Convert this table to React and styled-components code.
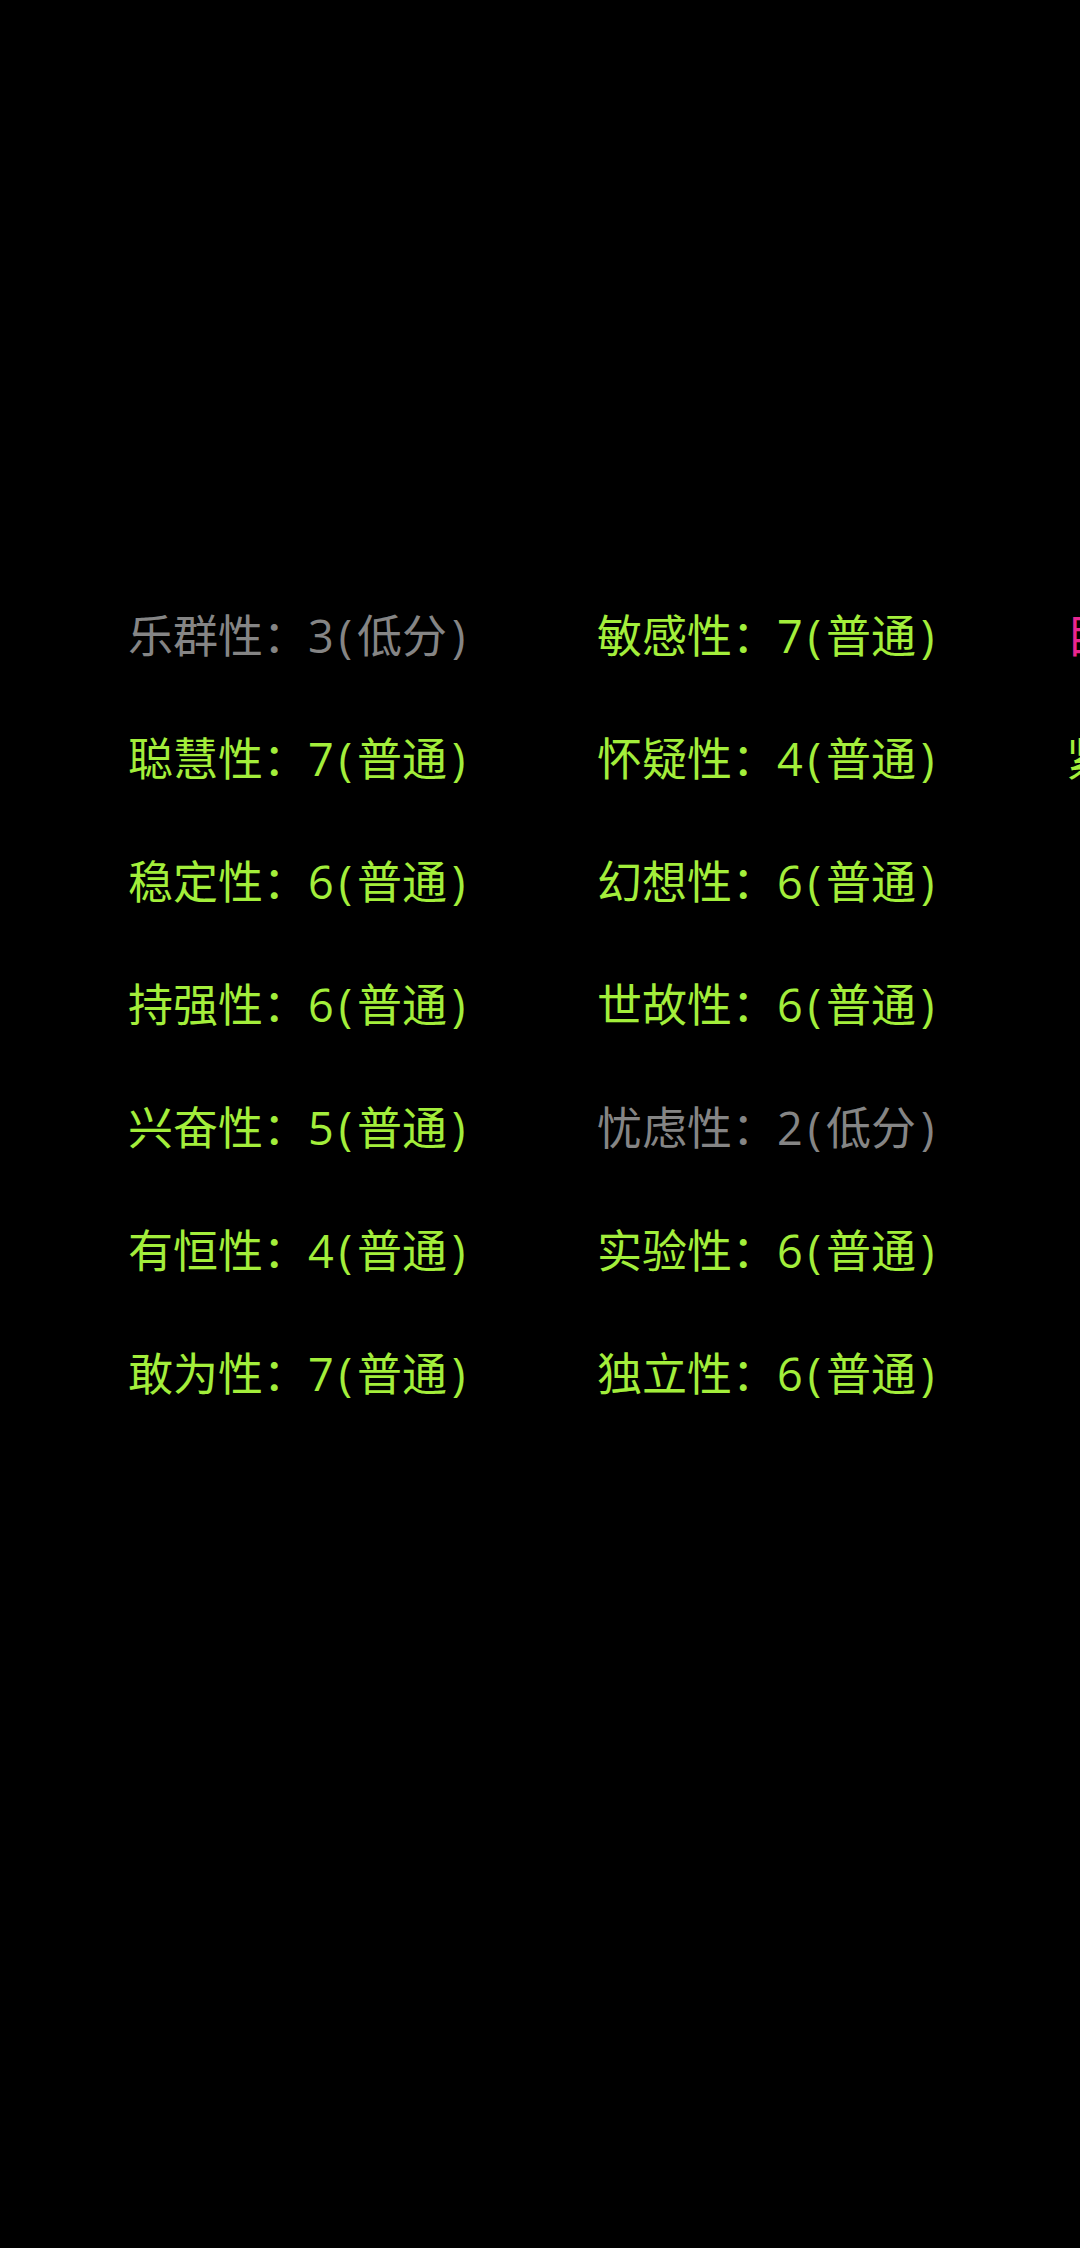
import React from "react";
import styled, { createGlobalStyle } from "styled-components";

const Global = createGlobalStyle`
  html, body {
    margin: 0;
    padding: 0;
    background: #000;
    overflow: hidden;
  }
  body {
    width: 1080px;
    height: 2248px;
    font-family: "Open Sans", "Noto Sans CJK SC", sans-serif;
  }
`;

const Screen = styled.div`
  width: 1080px;
  height: 2248px;
  background: #000;
  overflow: hidden;
  box-sizing: border-box;
  padding: 574px 0 0 128px;
`;

const Table = styled.div`
  display: grid;
  grid-template-columns: repeat(3, 469px);
  grid-auto-rows: 123px;
  width: 1407px;
`;

const COLORS = {
  normal: "#a3ee3b",
  low: "#858585",
  pink: "#e9268f",
};

const Cell = styled.div`
  font-family: "Open Sans", "Noto Sans CJK SC", sans-serif;
  font-size: 45px;
  line-height: 123px;
  white-space: nowrap;
  color: ${(p) => COLORS[p.$tone] || COLORS.normal};
`;

const Paren = styled.span`
  display: inline-block;
  padding: 0 5px;
`;

const rows = [
  [["乐群性", 3, "低分", "low"], ["敏感性", 7, "普通", "normal"], ["目标性", null, null, "pink"]],
  [["聪慧性", 7, "普通", "normal"], ["怀疑性", 4, "普通", "normal"], ["紧张性", null, null, "normal"]],
  [["稳定性", 6, "普通", "normal"], ["幻想性", 6, "普通", "normal"], null],
  [["持强性", 6, "普通", "normal"], ["世故性", 6, "普通", "normal"], null],
  [["兴奋性", 5, "普通", "normal"], ["忧虑性", 2, "低分", "low"], null],
  [["有恒性", 4, "普通", "normal"], ["实验性", 6, "普通", "normal"], null],
  [["敢为性", 7, "普通", "normal"], ["独立性", 6, "普通", "normal"], null],
];

export default function App() {
  return (
    <>
      <Global />
      <Screen>
        <Table>
          {rows.flatMap((row, ri) =>
            row.map((c, ci) => {
              if (!c) return <Cell key={`${ri}-${ci}`} />;
              const [name, score, level, tone] = c;
              return (
                <Cell key={`${ri}-${ci}`} $tone={tone}>
                  {score == null ? (
                    name
                  ) : (
                    <>
                      {`${name}：${score}`}
                      <Paren>(</Paren>
                      {level}
                      <Paren>)</Paren>
                    </>
                  )}
                </Cell>
              );
            })
          )}
        </Table>
      </Screen>
    </>
  );
}
